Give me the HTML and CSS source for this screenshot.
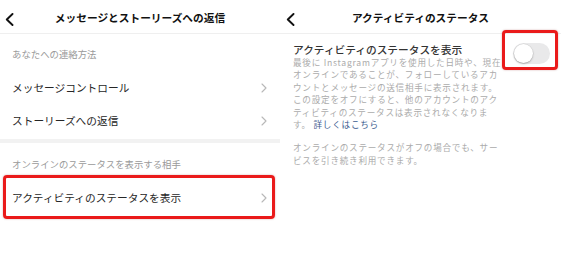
FILE: index.html
```html
<!DOCTYPE html>
<html lang="ja">
<head>
<meta charset="utf-8">
<link rel="stylesheet" href="styles.css">
</head>
<body>
<div class="screen">
  <section class="panel left">
    <header class="bar">
      <svg class="back" width="9" height="13" viewBox="0 0 9 13"><polyline points="7.5,1 1.8,6.5 7.5,12" fill="none" stroke="#111" stroke-width="1.9" stroke-linecap="round" stroke-linejoin="round"/></svg>
      <h1 class="title">メッセージとストーリーズへの返信</h1>
    </header>
    <div class="label first">あなたへの連絡方法</div>
    <div class="row">
      <span>メッセージコントロール</span>
      <svg class="chev" width="6" height="10" viewBox="0 0 6 10"><polyline points="1,1 5,5 1,9" fill="none" stroke="#b8b8b8" stroke-width="1.1" stroke-linecap="round" stroke-linejoin="round"/></svg>
    </div>
    <div class="row">
      <span>ストーリーズへの返信</span>
      <svg class="chev" width="6" height="10" viewBox="0 0 6 10"><polyline points="1,1 5,5 1,9" fill="none" stroke="#b8b8b8" stroke-width="1.1" stroke-linecap="round" stroke-linejoin="round"/></svg>
    </div>
    <div class="band"></div>
    <div class="label second">オンラインのステータスを表示する相手</div>
    <div class="row marked">
      <span>アクティビティのステータスを表示</span>
      <svg class="chev" width="6" height="10" viewBox="0 0 6 10"><polyline points="1,1 5,5 1,9" fill="none" stroke="#b8b8b8" stroke-width="1.1" stroke-linecap="round" stroke-linejoin="round"/></svg>
    </div>
  </section>
  <section class="panel right">
    <header class="bar">
      <svg class="back" width="9" height="13" viewBox="0 0 9 13"><polyline points="7.5,1 1.8,6.5 7.5,12" fill="none" stroke="#111" stroke-width="1.9" stroke-linecap="round" stroke-linejoin="round"/></svg>
      <h1 class="title">アクティビティのステータス</h1>
    </header>
    <div class="setting">
      <div class="texts">
        <div class="setting-title">アクティビティのステータスを表示</div>
        <p class="desc">最後に Instagramアプリを使用した日時や、現在<br>オンラインであることが、フォローしているアカ<br>ウントとメッセージの送信相手に表示されます。<br>この設定をオフにすると、他のアカウントのアク<br>ティビティのステータスは表示されなくなりま<br>す。 <span class="link">詳しくはこちら</span></p>
        <p class="desc note">オンラインのステータスがオフの場合でも、サー<br>ビスを引き続き利用できます。</p>
      </div>
      <div class="toggle-wrap">
        <div class="toggle"><div class="knob"></div></div>
        <div class="mark"></div>
      </div>
    </div>
  </section>
</div>
</body>
</html>
```

FILE: styles.css
```css
* { box-sizing: border-box; }
html, body { margin: 0; padding: 0; background: #fff; }
body {
  font-family: "Noto Sans CJK JP", "Noto Sans", sans-serif;
  color: #262626;
}
.screen {
  display: flex;
  width: 561px;
  height: 253px;
  overflow: hidden;
}
.panel {
  display: flex;
  flex-direction: column;
}
.left { width: 280px; }
.right { width: 281px; }

.bar {
  position: relative;
  height: 34px;
  border-bottom: 1px solid #efefef;
  display: flex;
  align-items: center;
  justify-content: center;
}
.back {
  position: absolute;
  top: 13px;
  left: 5px;
}
.right .back { left: 6px; }
.title {
  margin: 0;
  font-size: 10.7px;
  font-weight: 700;
  line-height: 12px;
  color: #111;
  padding-top: 3px;
}

.label {
  font-size: 9.4px;
  line-height: 12px;
  color: #9a9a9a;
  padding-left: 12px;
}
.label.first { padding-top: 14px; padding-bottom: 11px; }
.label.second { padding-top: 15px; padding-bottom: 5px; }

.row {
  height: 33px;
  display: flex;
  align-items: center;
  justify-content: space-between;
  padding: 0 13px 0 12px;
  font-size: 10.7px;
  color: #262626;
}
.row .chev { margin-top: 1px; }
.band {
  margin-top: 2px;
  height: 4px;
  background: #f2f2f2;
}
.row.marked {
  height: 44px;
  margin: 0 5px 0 3px;
  border: 3px solid #ea1a1a;
  border-radius: 4px;
  box-shadow: 0 0 2px rgba(120, 0, 0, 0.35);
  padding: 0 5px 0 6px;
}

.setting {
  display: flex;
  padding: 10px 0 0 13px;
}
.texts { width: 207px; }
.setting-title {
  font-size: 10.7px;
  line-height: 12px;
  font-weight: 500;
  color: #333;
  white-space: nowrap;
}
.desc {
  margin: 0;
  font-size: 8.6px;
  letter-spacing: 0.75px;
  line-height: 12.45px;
  color: #ababab;
  white-space: nowrap;
}
.desc.note { margin-top: 10.6px; }
.link { color: #3d5c90; }

.toggle-wrap {
  position: relative;
  margin-left: 13px;
  margin-top: -1px;
  width: 37px;
  height: 21px;
}
.toggle {
  width: 37px;
  height: 21px;
  border-radius: 11px;
  background: #e9e9ea;
  position: relative;
}
.knob {
  position: absolute;
  top: 1px;
  left: 1px;
  width: 19px;
  height: 19px;
  border-radius: 50%;
  background: #fff;
  box-shadow: 0 1px 2px rgba(0,0,0,0.25), 0 0 0 0.5px rgba(0,0,0,0.08);
}
.mark {
  position: absolute;
  top: -13px;
  left: -11px;
  width: 56px;
  height: 40px;
  border: 3px solid #ea1a1a;
  border-radius: 4px;
  box-shadow: 0 0 2px rgba(120, 0, 0, 0.35);
}
```
